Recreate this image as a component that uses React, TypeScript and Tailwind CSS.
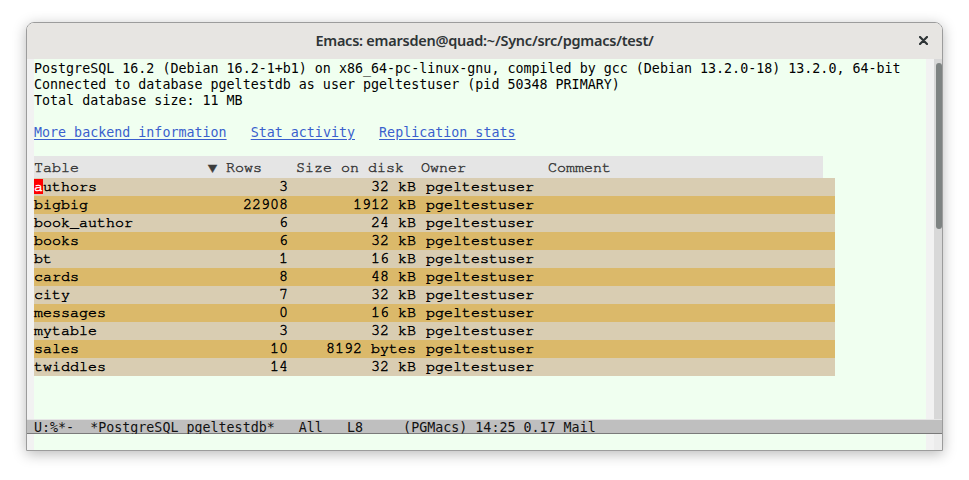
import React from "react";

const ROWS: [string, string, string][] = [
  ["authors", "3", "32 kB"],
  ["bigbig", "22908", "1912 kB"],
  ["book_author", "6", "24 kB"],
  ["books", "6", "32 kB"],
  ["bt", "1", "16 kB"],
  ["cards", "8", "48 kB"],
  ["city", "7", "32 kB"],
  ["messages", "0", "16 kB"],
  ["mytable", "3", "32 kB"],
  ["sales", "10", "8192 bytes"],
  ["twiddles", "14", "32 kB"],
];

const sansMono = "font-['DejaVu_Sans_Mono',monospace] text-[13.33px] leading-[16px]";
const courier =
  "font-['Nimbus_Mono_PS','Nimbus_Mono_L','FreeMono','Courier_New','Liberation_Mono',monospace] text-[15px] [-webkit-text-stroke:0.45px_currentColor]";

function TableRow({ row, index }: { row: [string, string, string]; index: number }) {
  const [name, count, size] = row;
  const bg = index % 2 === 0 ? "bg-[#d9cdb2]" : "bg-[#dbb96a]";
  return (
    <div className={`flex h-[18px] w-[801px] items-center whitespace-pre pt-[1px] text-black ${bg} ${courier}`}>
      <div className="w-[170px]">
        {index === 0 ? (
          <>
            <span className="bg-[#ff0000] text-white">{name[0]}</span>
            {name.slice(1)}
          </>
        ) : (
          name
        )}
      </div>
      <div className="w-[84px] text-right">{count}</div>
      <div className="w-[128px] text-right">{size}</div>
      <div className="pl-[10px]">pgeltestuser</div>
    </div>
  );
}

function Header() {
  return (
    <div className={`flex h-[22px] w-[789px] items-center whitespace-pre bg-[#e5e5e5] pt-[3px] text-[#3c3c3c] ${courier}`}>
      <div className="w-[174px]">Table</div>
      <div className="w-[88px]">▼ Rows</div>
      <div className="w-[125px]">Size on disk</div>
      <div className="w-[127px]">Owner</div>
      <div>Comment</div>
    </div>
  );
}

export default function App() {
  return (
    <div className="h-[480px] w-[969px] bg-white pt-[22px] pl-[26px]">
      <div className="flex h-[429px] w-[917px] flex-col overflow-hidden rounded-t-[8px] border border-[#9c9c9c] shadow-[0_3px_14px_rgba(0,0,0,0.28)]">
        {/* title bar */}
        <div className="relative flex h-[36px] shrink-0 items-center justify-center bg-[#e7e5e2] pb-[1px]">
          <span className="font-['Noto_Sans',sans-serif] text-[14.5px] font-semibold tracking-[-0.25px] text-[#2e3436]">
            Emacs: emarsden@quad:~/Sync/src/pgmacs/test/
          </span>
          <svg className="absolute right-[14px] top-[13px]" width="9" height="9" viewBox="0 0 9 9">
            <path d="M1 1 L8 8 M8 1 L1 8" stroke="#2e3436" strokeWidth="2.2" strokeLinecap="round" />
          </svg>
        </div>

        {/* buffer */}
        <div className="flex h-[360px] shrink-0">
          <div className="w-[7px] bg-[#f2f2f2]" />
          <div className="flex-1 bg-[#f0fff0] pt-[2px]">
            <div className={`whitespace-pre text-black ${sansMono}`}>
              <div>PostgreSQL 16.2 (Debian 16.2-1+b1) on x86_64-pc-linux-gnu, compiled by gcc (Debian 13.2.0-18) 13.2.0, 64-bit</div>
              <div>Connected to database pgeltestdb as user pgeltestuser (pid 50348 PRIMARY)</div>
              <div>Total database size: 11 MB</div>
              <div>&nbsp;</div>
              <div className="text-[#3a5fcd]">
                <span className="underline underline-offset-2">More backend information</span>
                {"   "}
                <span className="underline underline-offset-2">Stat activity</span>
                {"   "}
                <span className="underline underline-offset-2">Replication stats</span>
              </div>
              <div className="h-[15px]" />
            </div>
            <Header />
            {ROWS.map((r, i) => (
              <TableRow key={r[0]} row={r} index={i} />
            ))}
          </div>
          <div className="w-[8px] bg-[#f2f2f2]" />
          <div className="w-[8px] bg-[#d8d8d8] pt-[4px] pl-[2px]">
            <div className="h-[166px] w-[6px] rounded-full bg-[#7e8382]" />
          </div>
        </div>

        {/* mode line */}
        <div
          className={`flex h-[15px] shrink-0 items-center whitespace-pre border-t border-b border-t-[#e6e6e6] border-b-[#7a7a7a] bg-[#bfbfbf] pl-[7px] pt-[2px] text-[#111] ${sansMono} leading-[13px]`}
        >
          U:%*-  *PostgreSQL pgeltestdb*   All   L8     (PGMacs) 14:25 0.17 Mail
        </div>

        {/* echo area */}
        <div className="flex flex-1">
          <div className="w-[7px] bg-[#f2f2f2]" />
          <div className="flex-1 bg-[#f0fff0]" />
          <div className="w-[8px] bg-[#f2f2f2]" />
          <div className="w-[8px] bg-[#ececec]" />
        </div>
      </div>
    </div>
  );
}
